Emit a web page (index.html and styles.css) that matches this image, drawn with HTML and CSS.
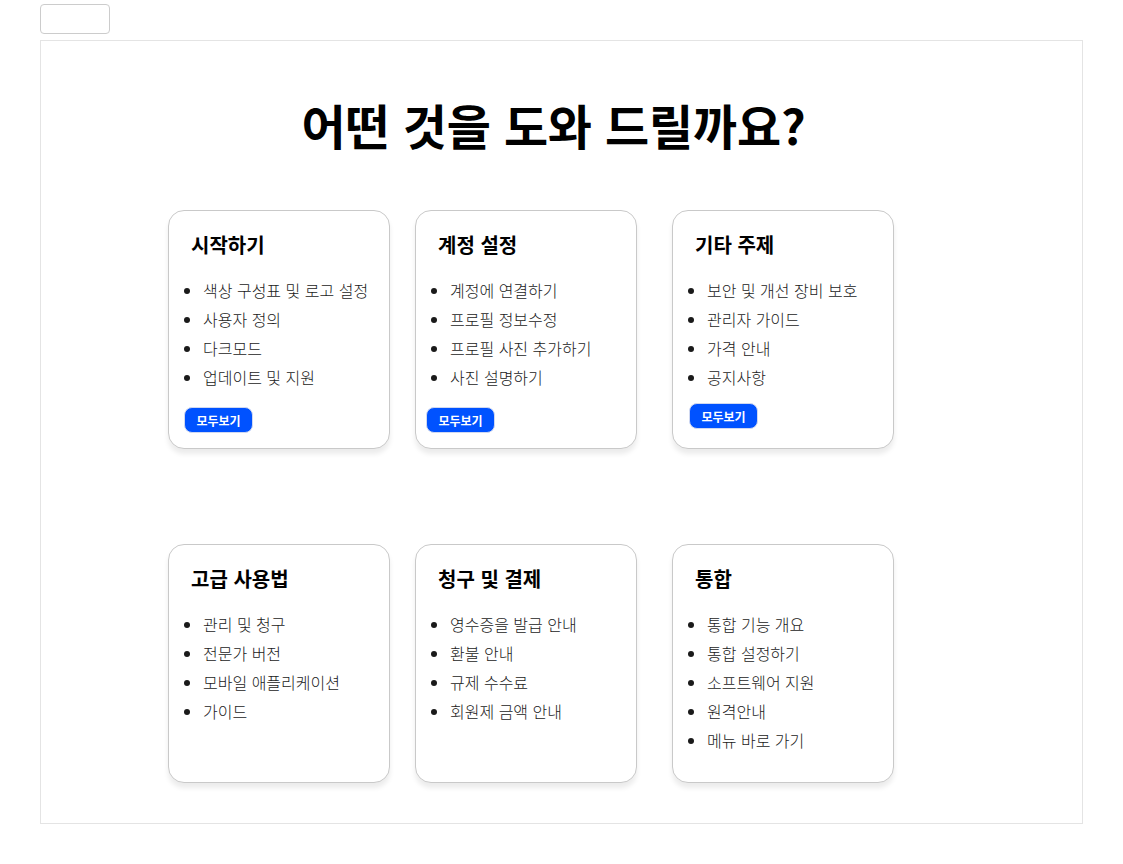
FILE: index.html
```html
<!DOCTYPE html>
<html lang="ko">
<head>
    <meta charset="UTF-8">
    <meta name="viewport" content="width=device-width, initial-scale=1.0">
    <title>도움말 센터</title>
    <link rel="stylesheet" href="styles.css">
</head>
<body>

    <button class="top-button" type="button"></button>

    <div class="help-container">

        <h1 class="help-title">어떤 것을 도와 드릴까요?</h1>

        <!-- Help topics -->
        <div class="card-grid">

            <div class="card">
                <h2>시작하기</h2>
                <ul>
                    <li>색상 구성표 및 로고 설정</li>
                    <li>사용자 정의</li>
                    <li>다크모드</li>
                    <li>업데이트 및 지원</li>
                </ul>
                <button class="more-button">모두보기</button>
            </div>

            <div class="card">
                <h2>계정 설정</h2>
                <ul>
                    <li>계정에 연결하기</li>
                    <li>프로필 정보수정</li>
                    <li>프로필 사진 추가하기</li>
                    <li>사진 설명하기</li>
                </ul>
                <button class="more-button narrow">모두보기</button>
            </div>

            <div class="card">
                <h2>기타 주제</h2>
                <ul>
                    <li>보안 및 개선 장비 보호</li>
                    <li>관리자 가이드</li>
                    <li>가격 안내</li>
                    <li>공지사항</li>
                </ul>
                <button class="more-button raised">모두보기</button>
            </div>

            <div class="card">
                <h2>고급 사용법</h2>
                <ul>
                    <li>관리 및 청구</li>
                    <li>전문가 버전</li>
                    <li>모바일 애플리케이션</li>
                    <li>가이드</li>
                </ul>
            </div>

            <div class="card">
                <h2>청구 및 결제</h2>
                <ul>
                    <li>영수증을 발급 안내</li>
                    <li>환불 안내</li>
                    <li>규제 수수료</li>
                    <li>회원제 금액 안내</li>
                </ul>
            </div>

            <div class="card">
                <h2>통합</h2>
                <ul>
                    <li>통합 기능 개요</li>
                    <li>통합 설정하기</li>
                    <li>소프트웨어 지원</li>
                    <li>원격안내</li>
                    <li>메뉴 바로 가기</li>
                </ul>
            </div>

        </div>
    </div>

</body>
</html>
```

FILE: styles.css
```css
body {
    font-family: "Noto Sans CJK KR", "Noto Sans", sans-serif;
    background-color: #ffffff;
    color: #111;
    margin: 0;
    padding: 4px 40px 40px 40px;
}

.top-button {
    display: block;
    width: 70px;
    height: 30px;
    background: white;
    border: 1px solid #cccccc;
    border-radius: 4px;
    padding: 0;
}

.help-container {
    margin-top: 6px;
    border: 1px solid #e4e4e4;
    height: 784px;
    box-sizing: border-box;
}

.help-title {
    margin: 54px 16px 0 0;
    text-align: center;
    font-size: 48px;
    font-weight: 700;
    line-height: 58px;
    letter-spacing: -0.2px;
    color: #000;
}

.card-grid {
    display: flex;
    flex-wrap: wrap;
    width: 760px;
    margin: 57px 0 0 127px;
    row-gap: 95px;
}

.card {
    width: 222px;
    height: 239px;
    box-sizing: border-box;
    margin-right: 25px;
    background: white;
    border: 1px solid #c9c9c9;
    border-radius: 16px;
    box-shadow: 0px 5px 5px rgba(0, 0, 0, 0.08);
    padding-top: 20px;
}

.card:nth-child(3n+2) {
    margin-right: 35px;
}

.card:nth-child(3n) {
    margin-right: 0;
}

.card h2 {
    margin: 0 0 17px 22px;
    font-size: 20px;
    font-weight: 700;
    line-height: 28px;
    color: #000;
}

.card ul {
    margin: 0;
    padding-left: 34px;
    font-size: 16px;
    font-weight: 300;
    line-height: 29px;
    color: #1a1a1a;
}

.more-button {
    display: block;
    margin: 15px 0 0 15px;
    width: 69px;
    height: 26px;
    padding: 0;
    background-color: #0052ff;
    color: white;
    border: 1px solid #d0d8f0;
    border-radius: 8px;
    font-family: inherit;
    font-size: 12px;
    font-weight: 700;
    cursor: pointer;
}

.more-button.narrow {
    margin-left: 10px;
}

.more-button.raised {
    margin-top: 11px;
    margin-left: 16px;
}
```
